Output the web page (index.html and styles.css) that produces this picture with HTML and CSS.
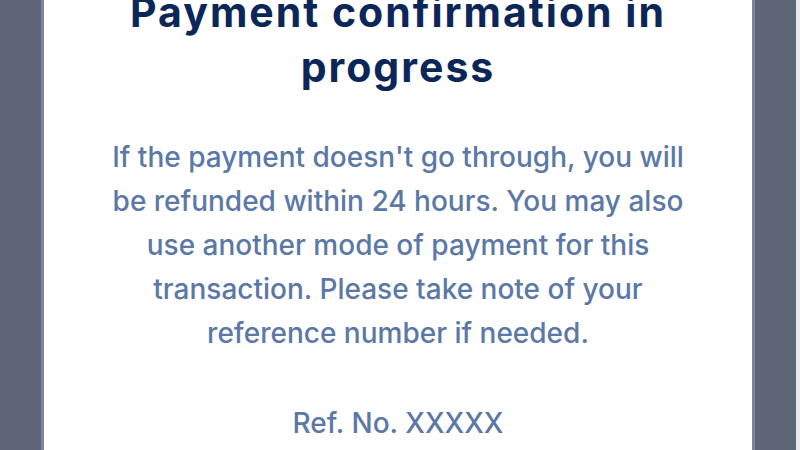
FILE: index.html
```html
<!DOCTYPE html>
<html lang="en">
<head>
<meta charset="utf-8">
<link rel="stylesheet" href="styles.css">
</head>
<body>
<div class="screen">
  <div class="overlay overlay-left"></div>
  <main class="card">
    <h1 class="title">Payment confirmation in progress</h1>
    <p class="message">If the payment doesn't go through, you will be refunded within 24 hours. You may also use another mode of payment for this transaction. Please take note of your reference number if needed.</p>
    <p class="ref">Ref. No. XXXXX</p>
  </main>
  <div class="overlay overlay-right"></div>
  <div class="edge"></div>
</div>
</body>
</html>
```
FILE: styles.css
```css
html, body {
  margin: 0;
  padding: 0;
  width: 800px;
  height: 450px;
  overflow: hidden;
  background: #5d6577;
}
.screen {
  display: flex;
  width: 800px;
  height: 450px;
}
.overlay {
  width: 44px;
  background: #5d6577;
}
.overlay-left {
  box-shadow: inset -3px 0 0 #7d8495;
}
.overlay-right {
  box-shadow: inset 3px 0 0 #7d8495;
}
.edge {
  width: 4px;
  background: #e6e8ee;
}
.card {
  width: 708px;
  background: #ffffff;
  display: flex;
  flex-direction: column;
  align-items: center;
  text-align: center;
  font-family: Inter, "Open Sans", sans-serif;
}
.title {
  margin: -15px 0 0;
  width: 600px;
  font-size: 41px;
  line-height: 55px;
  font-weight: 700;
  letter-spacing: 2px;
  color: #0c2658;
}
.message {
  margin: 40px 0 0;
  width: 592px;
  font-size: 28px;
  line-height: 44px;
  font-weight: 500;
  color: #5b78a6;
}
.ref {
  margin: 46px 0 0;
  font-size: 28px;
  line-height: 44px;
  font-weight: 500;
  color: #5b78a6;
}
```
